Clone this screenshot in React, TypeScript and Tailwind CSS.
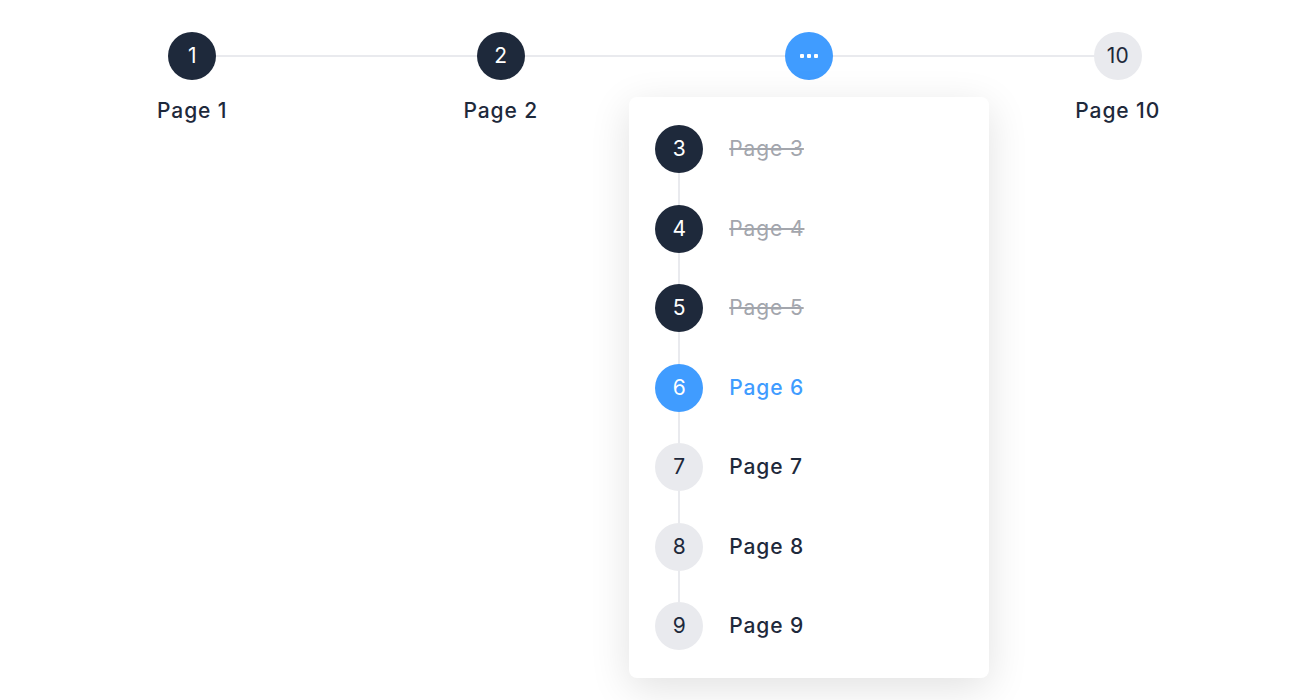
import React from "react";

type State = "done" | "current" | "todo";

interface Step {
  num: number;
  label: string;
  state: State;
}

const hidden: Step[] = [
  { num: 3, label: "Page 3", state: "done" },
  { num: 4, label: "Page 4", state: "done" },
  { num: 5, label: "Page 5", state: "done" },
  { num: 6, label: "Page 6", state: "current" },
  { num: 7, label: "Page 7", state: "todo" },
  { num: 8, label: "Page 8", state: "todo" },
  { num: 9, label: "Page 9", state: "todo" },
];

function Circle({ state, children }: { state: State; children: React.ReactNode }) {
  const color =
    state === "done"
      ? "bg-[#1e293b] text-white"
      : state === "current"
        ? "bg-[#409cff] text-white"
        : "bg-[#e9eaee] text-[#1e293b]";
  return (
    <div className={`relative z-10 flex h-12 w-12 shrink-0 items-center justify-center rounded-full text-[21px] ${color}`}>
      {children}
    </div>
  );
}

function Dots() {
  return (
    <div className="flex items-center gap-[3px]">
      <span className="h-[4px] w-[4px] rounded-[1px] bg-white" />
      <span className="h-[4px] w-[4px] rounded-[1px] bg-white" />
      <span className="h-[4px] w-[4px] rounded-[1px] bg-white" />
    </div>
  );
}

export default function App() {
  return (
    <div className="min-h-[700px] w-[1300px] bg-white font-['Inter',sans-serif] text-[#1e293b]">
      <div className="relative ml-[38px] grid w-[1234px] grid-cols-4 pt-8">
        {/* connecting line */}
        <div className="absolute left-[154px] right-[154px] top-[55px] h-[2px] bg-[#e9eaee]" />

        <div className="flex flex-col items-center">
          <Circle state="done">1</Circle>
          <p className="mt-[19px] text-[21px] font-medium leading-6 tracking-[0.9px]">Page 1</p>
        </div>
        <div className="flex flex-col items-center">
          <Circle state="done">2</Circle>
          <p className="mt-[19px] text-[21px] font-medium leading-6 tracking-[0.9px]">Page 2</p>
        </div>
        <div className="relative flex flex-col items-center">
          <Circle state="current">
            <Dots />
          </Circle>
          <div className="absolute left-1/2 top-[65px] z-20 w-[360px] -translate-x-1/2 rounded-lg bg-white px-[26px] py-[28px] shadow-[0_10px_40px_rgba(0,0,0,0.12)]">
            <div className="flex flex-col">
              {hidden.map((s, i) => (
                <div key={s.num} className="flex">
                  <div className="flex flex-col items-center">
                    <Circle state={s.state}>{s.num}</Circle>
                    {i < hidden.length - 1 && <div className="h-[31.5px] w-[2px] bg-[#e9eaee]" />}
                  </div>
                  <p
                    className={`ml-[26px] flex h-12 items-center text-[21px] leading-6 tracking-[0.9px] ${
                      s.state === "done"
                        ? "text-[#a3a6ad] line-through"
                        : s.state === "current"
                          ? "font-medium text-[#409cff]"
                          : "font-medium text-[#1e293b]"
                    }`}
                  >
                    {s.label}
                  </p>
                </div>
              ))}
            </div>
          </div>
        </div>
        <div className="flex flex-col items-center">
          <Circle state="todo">10</Circle>
          <p className="mt-[19px] text-[21px] font-medium leading-6 tracking-[0.9px]">Page 10</p>
        </div>
      </div>
    </div>
  );
}
